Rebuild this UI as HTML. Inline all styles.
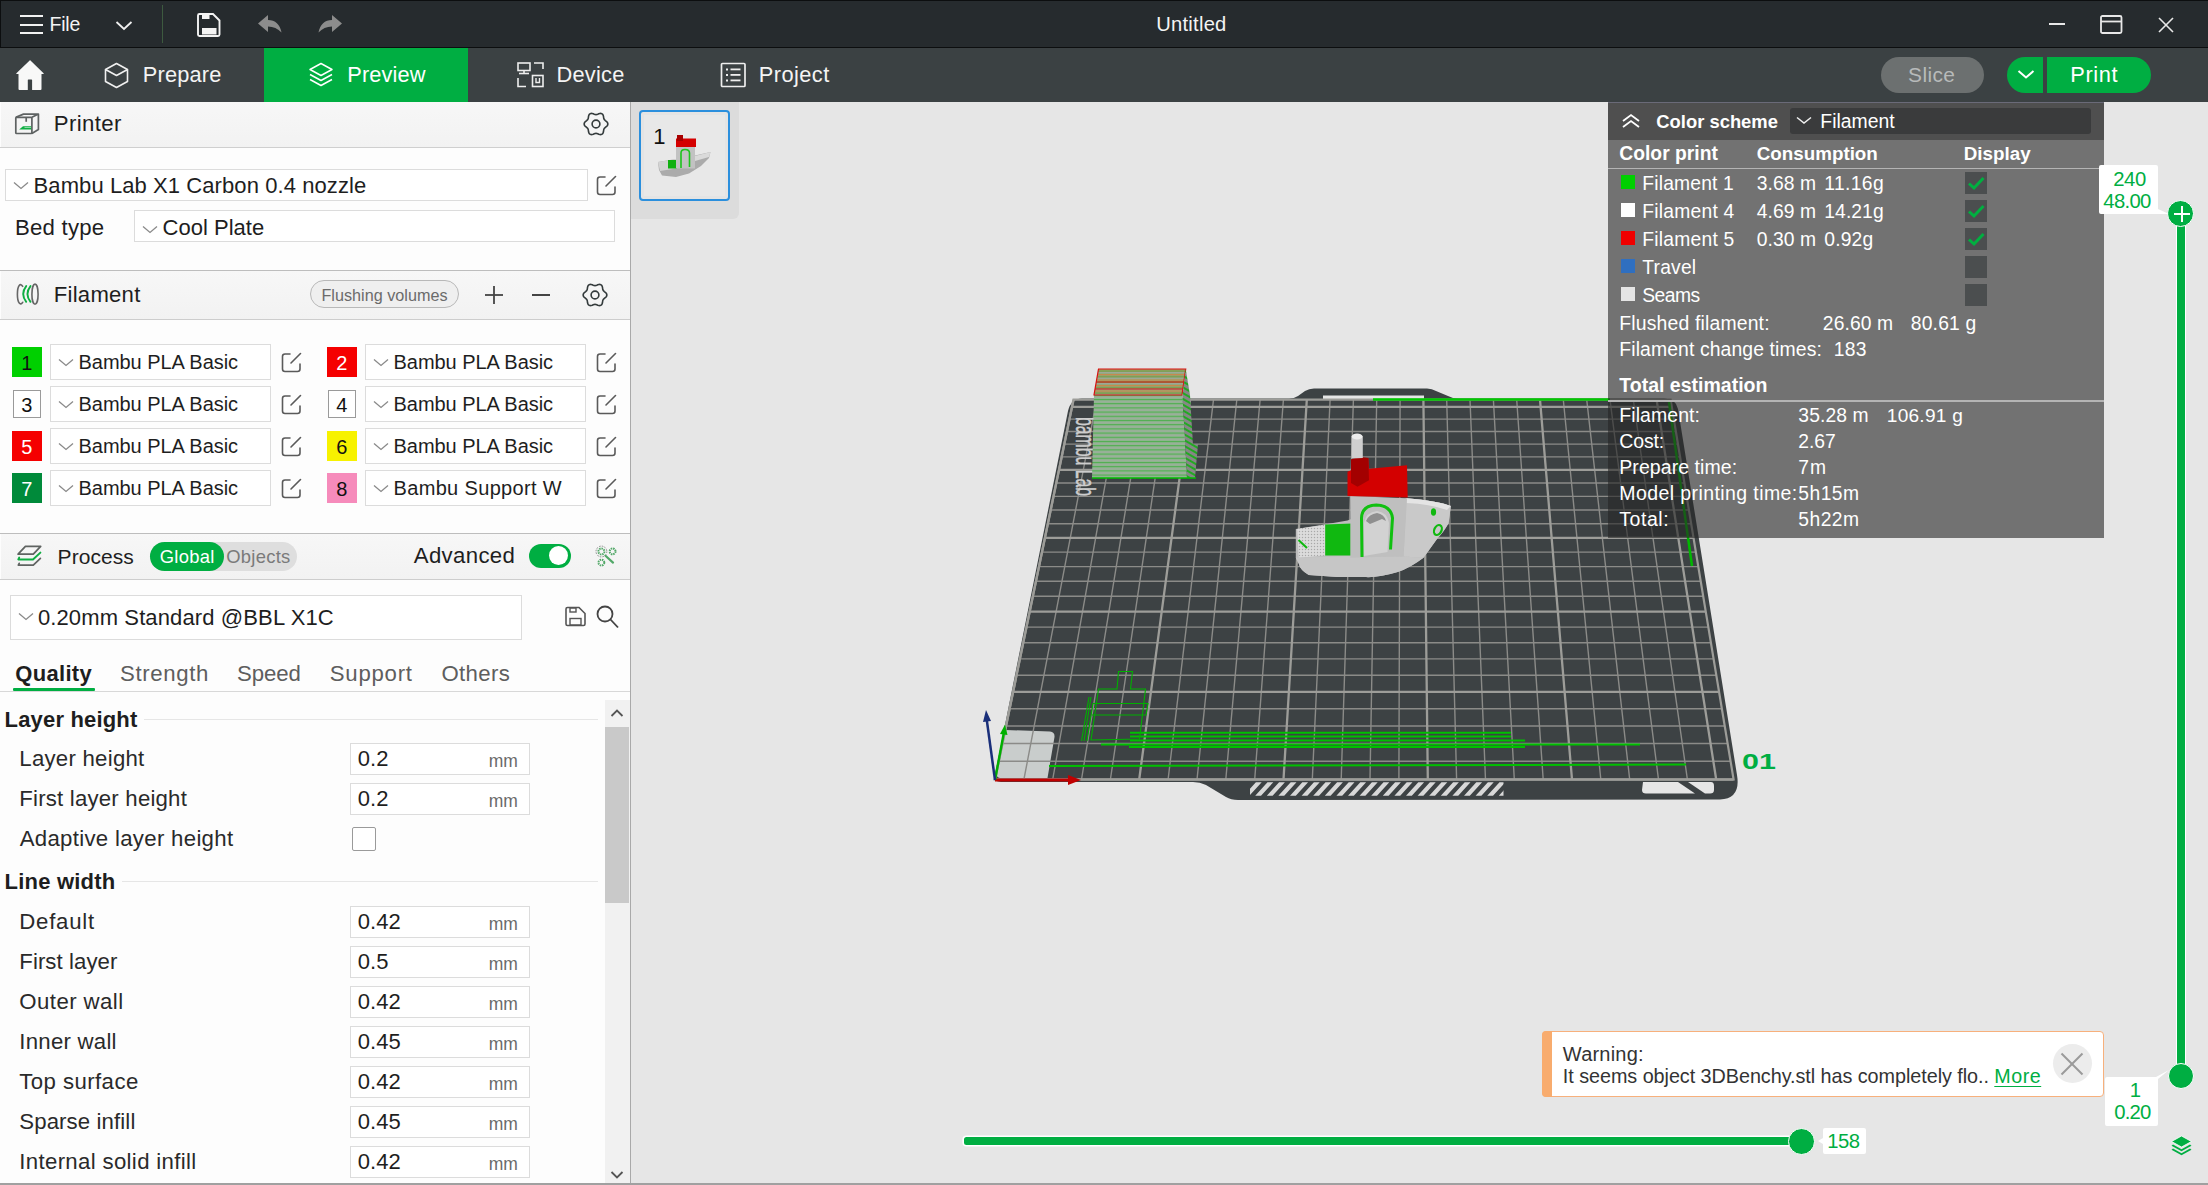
<!DOCTYPE html>
<html><head><meta charset="utf-8"><style>
html,body{margin:0;padding:0;width:2208px;height:1185px;overflow:hidden;background:#e6e6e6;}
body{position:relative;font-family:"Liberation Sans",sans-serif;}
.t{position:absolute;white-space:nowrap;}
svg{overflow:visible}
</style></head><body>
<div style="position:absolute;left:0px;top:0px;width:2208px;height:48px;background:#262b2e;"></div>
<div style="position:absolute;left:0px;top:0px;width:2208px;height:1px;background:#0c0e0f;"></div>
<div style="position:absolute;left:0px;top:0px;width:1px;height:48px;background:#0c0e0f;"></div>
<div style="position:absolute;left:0px;top:47px;width:2208px;height:1px;background:#0c0e0f;"></div>
<div style="position:absolute;left:20px;top:15px;width:23px;height:2px;background:#f2f2f2;"></div>
<div style="position:absolute;left:20px;top:24px;width:23px;height:2px;background:#f2f2f2;"></div>
<div style="position:absolute;left:20px;top:32px;width:23px;height:2px;background:#f2f2f2;"></div>
<div class="t" style="left:49.40px;top:14.99px;font-size:19.5px;line-height:19.5px;color:#f4f4f4;letter-spacing:-0.14px;">File</div>
<svg style="position:absolute;left:112px;top:18px;" width="26" height="14" viewBox="0 0 26 14"><polyline points="4.5,4 12,11 19.5,4" fill="none" stroke="#f0f0f0" stroke-width="1.8"/></svg>
<div style="position:absolute;left:162px;top:5px;width:1px;height:38px;background:#3d5a3f;"></div>
<svg style="position:absolute;left:196px;top:11px;" width="28" height="28" viewBox="0 0 28 28"><path d="M3.5,3 H17 L23.5,9.5 V23.5 Q23.5,25 22,25 H3.5 Q2,25 2,23.5 V4.5 Q2,3 3.5,3 Z" fill="none" stroke="#f4f4f4" stroke-width="1.9"/><rect x="6" y="3.5" width="7.5" height="4.5" fill="#f4f4f4"/><rect x="6" y="17" width="14.5" height="6.5" fill="#f4f4f4"/></svg>
<svg style="position:absolute;left:256.5px;top:14px;" width="28" height="22" viewBox="0 0 28 22"><path d="M1,9.5 L11,1 V6 Q22,6 24.5,18.5 Q19,12.5 11,12.5 V18 Z" fill="#8c8c8c"/></svg>
<svg style="position:absolute;left:316px;top:14px;" width="28" height="22" viewBox="0 0 28 22"><path d="M26,9.5 L16,1 V6 Q5,6 2.5,18.5 Q8,12.5 16,12.5 V18 Z" fill="#8c8c8c"/></svg>
<div class="t" style="left:1156.20px;top:14.40px;font-size:20.2px;line-height:20.2px;color:#f4f4f4;letter-spacing:0.245px;">Untitled</div>
<div style="position:absolute;left:2049px;top:23px;width:16px;height:2px;background:#e8e8e8;"></div>
<svg style="position:absolute;left:2100px;top:15px;" width="23" height="19" viewBox="0 0 23 19"><rect x="1" y="1" width="20.5" height="17" rx="1.5" fill="none" stroke="#e8e8e8" stroke-width="1.8"/><line x1="1" y1="6.5" x2="21.5" y2="6.5" stroke="#e8e8e8" stroke-width="1.8"/></svg>
<svg style="position:absolute;left:2158px;top:17px;" width="16" height="16" viewBox="0 0 16 16"><line x1="1" y1="1" x2="15" y2="15" stroke="#e8e8e8" stroke-width="1.6"/><line x1="15" y1="1" x2="1" y2="15" stroke="#e8e8e8" stroke-width="1.6"/></svg>
<div style="position:absolute;left:0px;top:48px;width:2208px;height:54px;background:#3b4143;"></div>
<div style="position:absolute;left:264px;top:48px;width:204px;height:54px;background:#00ae42;"></div>
<svg style="position:absolute;left:15px;top:59px;" width="31" height="32" viewBox="0 0 31 32"><path d="M14.9,1.2 Q15,1 15.2,1.2 L28.6,14.3 Q29.2,15 28.3,15 L26.5,15 V30 Q26.5,31 25.5,31 H17.1 V21 Q17.1,20.4 16.5,20.4 H13.4 Q12.8,20.4 12.8,21 V31 H4.5 Q3.5,31 3.5,30 V15 L1.7,15 Q0.8,15 1.4,14.3 Z" fill="#f8f8f8"/></svg>
<svg style="position:absolute;left:104px;top:62px;" width="26" height="27" viewBox="0 0 26 27"><path d="M12.5,1.5 L23.5,7.5 V19.5 L12.5,25.5 L1.5,19.5 V7.5 Z M1.5,7.5 L12.5,13.5 L23.5,7.5 M12.5,13.5" fill="none" stroke="#f0f0f0" stroke-width="1.6" stroke-linejoin="round"/></svg>
<div class="t" style="left:142.80px;top:64.15px;font-size:21.8px;line-height:21.8px;color:#f4f4f4;letter-spacing:0.175px;">Prepare</div>
<svg style="position:absolute;left:309px;top:62px;" width="25" height="26" viewBox="0 0 25 26"><path d="M12,1.5 L23,7.5 L12,13.5 L1,7.5 Z" fill="none" stroke="#fff" stroke-width="1.5" stroke-linejoin="round"/><path d="M1,12.5 L12,18.5 L23,12.5" fill="none" stroke="#fff" stroke-width="1.5" stroke-linejoin="round"/><path d="M1,17.5 L12,23.5 L23,17.5" fill="none" stroke="#fff" stroke-width="1.5" stroke-linejoin="round"/></svg>
<div class="t" style="left:347.30px;top:63.75px;font-size:21.8px;line-height:21.8px;color:#ffffff;letter-spacing:0.111px;">Preview</div>
<svg style="position:absolute;left:517px;top:62px;" width="28" height="26" viewBox="0 0 28 26"><rect x="1" y="1" width="12" height="7.5" fill="none" stroke="#eee" stroke-width="1.6"/><line x1="7" y1="8.5" x2="7" y2="11" stroke="#eee" stroke-width="1.6"/><line x1="2" y1="11.5" x2="12" y2="11.5" stroke="#eee" stroke-width="1.6"/><path d="M17,1 H26 V7" fill="none" stroke="#eee" stroke-width="1.6"/><path d="M1,16 V24.5 H9" fill="none" stroke="#eee" stroke-width="1.6"/><rect x="15.5" y="13.5" width="10.5" height="11" fill="none" stroke="#eee" stroke-width="1.6"/><path d="M19,16 V20.5 H22.5 V16" fill="none" stroke="#eee" stroke-width="1.4"/></svg>
<div class="t" style="left:556.50px;top:64.05px;font-size:21.8px;line-height:21.8px;color:#f4f4f4;letter-spacing:0.253px;">Device</div>
<svg style="position:absolute;left:720px;top:62px;" width="27" height="26" viewBox="0 0 27 26"><rect x="1.5" y="1.5" width="23.5" height="23" rx="1" fill="none" stroke="#eee" stroke-width="1.7"/><g fill="#eee"><rect x="6" y="6.5" width="2" height="2"/><rect x="6" y="12" width="2" height="2"/><rect x="6" y="17.5" width="2" height="2"/><rect x="10.5" y="6.5" width="10" height="1.8"/><rect x="10.5" y="12" width="10" height="1.8"/><rect x="10.5" y="17.5" width="10" height="1.8"/></g></svg>
<div class="t" style="left:758.80px;top:63.75px;font-size:21.8px;line-height:21.8px;color:#f4f4f4;letter-spacing:0.426px;">Project</div>
<div style="position:absolute;left:1881px;top:57px;width:103px;height:36px;background:#6c7070;border-radius:18px;"></div>
<div class="t" style="left:1908.10px;top:64.51px;font-size:20.9px;line-height:20.9px;color:#b7baba;letter-spacing:0.4px;">Slice</div>
<div style="position:absolute;left:2007px;top:57px;width:36px;height:36px;background:#00ae42;border-radius:18px 0 0 18px;"></div>
<svg style="position:absolute;left:2017px;top:69px;" width="18" height="12" viewBox="0 0 18 12"><polyline points="1.5,2 9,8.5 16.5,2" fill="none" stroke="#fff" stroke-width="2"/></svg>
<div style="position:absolute;left:2047px;top:57px;width:104px;height:36px;background:#00ae42;border-radius:0 18px 18px 0;"></div>
<div class="t" style="left:2070.30px;top:63.75px;font-size:21.8px;line-height:21.8px;color:#ffffff;letter-spacing:0.619px;">Print</div>
<div style="position:absolute;left:0px;top:102px;width:630px;height:1083px;background:#fdfdfd;"></div>
<div style="position:absolute;left:630px;top:102px;width:1px;height:1083px;background:#a9a9a9;"></div>
<div style="position:absolute;left:1px;top:102px;width:629px;height:45px;background:linear-gradient(#f7f7f7,#f2f2f2);"></div>
<div style="position:absolute;left:0px;top:147px;width:630px;height:1px;background:#cfcfcf;"></div>
<svg style="position:absolute;left:10px;top:108px;" width="35" height="32" viewBox="0 0 35 32"><g fill="none" stroke="#5e6262" stroke-width="1.7" stroke-linejoin="round"><rect x="5.8" y="9.3" width="16.1" height="16.2" rx="0.8"/><path d="M5.8,9.3 L13.5,6.1 H28.4 L21.9,9.3 M28.4,6.1 V21.6 L21.9,25.5"/><line x1="16.2" y1="9.5" x2="16.2" y2="13.8"/></g><path d="M9.2,21.5 L13,18.2 H21.1 V21.5 Z" fill="#0fae42"/><line x1="14.5" y1="19.5" x2="21" y2="19.5" stroke="#bfe8cc" stroke-width="0.7"/></svg>
<div class="t" style="left:53.80px;top:112.71px;font-size:22.2px;line-height:22.2px;color:#1e1e1e;letter-spacing:0.353px;">Printer</div>
<svg style="position:absolute;left:584px;top:112px;" width="24" height="24" viewBox="0 0 24 24"><path d="M23.85,12.00 L23.64,13.02 L23.05,13.95 L22.24,14.74 L21.37,15.41 L20.63,16.02 L20.10,16.67 L19.80,17.46 L19.64,18.41 L19.50,19.50 L19.22,20.60 L18.70,21.57 L17.93,22.26 L16.94,22.59 L15.84,22.55 L14.74,22.24 L13.73,21.82 L12.83,21.48 L12.00,21.35 L11.17,21.48 L10.27,21.82 L9.26,22.24 L8.16,22.55 L7.06,22.59 L6.08,22.26 L5.30,21.57 L4.78,20.60 L4.50,19.50 L4.36,18.41 L4.20,17.46 L3.90,16.68 L3.37,16.02 L2.63,15.41 L1.76,14.74 L0.95,13.95 L0.36,13.02 L0.15,12.00 L0.36,10.98 L0.95,10.05 L1.76,9.26 L2.63,8.59 L3.37,7.98 L3.90,7.32 L4.20,6.54 L4.36,5.59 L4.50,4.50 L4.78,3.40 L5.30,2.43 L6.07,1.74 L7.06,1.41 L8.16,1.45 L9.26,1.76 L10.27,2.18 L11.17,2.52 L12.00,2.65 L12.83,2.52 L13.73,2.18 L14.74,1.76 L15.84,1.45 L16.94,1.41 L17.92,1.74 L18.70,2.43 L19.22,3.40 L19.50,4.50 L19.64,5.59 L19.80,6.54 L20.10,7.33 L20.63,7.98 L21.37,8.59 L22.24,9.26 L23.05,10.05 L23.64,10.98 L23.85,12.00 Z" fill="none" stroke="#343b3c" stroke-width="1.6" stroke-linejoin="round"/><circle cx="12" cy="12" r="3.9" fill="none" stroke="#343b3c" stroke-width="1.6"/></svg>
<div style="position:absolute;left:5px;top:169px;width:583px;height:32px;border:1px solid #dcdcdc;background:#fff;box-sizing:border-box;"></div>
<svg style="position:absolute;left:13px;top:181px;" width="16" height="9" viewBox="0 0 16 9"><polyline points="1,1.5 8,7.5 15,1.5" fill="none" stroke="#8a8a8a" stroke-width="1.3"/></svg>
<div class="t" style="left:33.60px;top:174.88px;font-size:22px;line-height:22px;color:#1e1e1e;letter-spacing:0.083px;">Bambu Lab X1 Carbon 0.4 nozzle</div>
<svg style="position:absolute;left:595.5px;top:174.5px;" width="21" height="21" viewBox="0 0 21 21"><path d="M9,2 H4 Q1.5,2 1.5,4.5 V17 Q1.5,19.5 4,19.5 H16.5 Q19,19.5 19,17 V12" fill="none" stroke="#5a5a5a" stroke-width="1.6" stroke-linecap="round"/><line x1="10" y1="11" x2="19.5" y2="1.5" stroke="#5a5a5a" stroke-width="1.6" stroke-linecap="round"/></svg>
<div class="t" style="left:15.00px;top:216.51px;font-size:22.2px;line-height:22.2px;color:#1e1e1e;letter-spacing:0.225px;">Bed type</div>
<div style="position:absolute;left:134px;top:210px;width:481px;height:32px;border:1px solid #dcdcdc;background:#fff;box-sizing:border-box;"></div>
<svg style="position:absolute;left:142px;top:225px;" width="16" height="9" viewBox="0 0 16 9"><polyline points="1,1.5 8,7.5 15,1.5" fill="none" stroke="#8a8a8a" stroke-width="1.3"/></svg>
<div class="t" style="left:162.60px;top:216.68px;font-size:22px;line-height:22px;color:#1e1e1e;letter-spacing:0.011px;">Cool Plate</div>
<div style="position:absolute;left:0px;top:270px;width:630px;height:1px;background:#bdbdbd;"></div>
<div style="position:absolute;left:1px;top:271px;width:629px;height:48px;background:linear-gradient(#f7f7f7,#f2f2f2);"></div>
<div style="position:absolute;left:0px;top:319px;width:630px;height:1px;background:#cdcdcd;"></div>
<svg style="position:absolute;left:10px;top:278px;" width="35" height="32" viewBox="0 0 35 32"><g fill="none" stroke-width="1.6" stroke-linecap="round"><path d="M12.7,8.4 C10.5,4.5 7.4,7 7.4,16.2 C7.4,25.4 10.5,28 12.7,24.3" stroke="#666"/><ellipse cx="25" cy="16.2" rx="3.1" ry="10.1" stroke="#666"/><path d="M16.2,8.1 Q10.2,16 16.2,23.8" stroke="#0fae42" stroke-width="1.9"/><path d="M20.5,8.1 Q14.4,16 20.5,23.8" stroke="#0fae42" stroke-width="1.9"/></g></svg>
<div class="t" style="left:53.80px;top:284.09px;font-size:22.1px;line-height:22.1px;color:#1e1e1e;letter-spacing:0.252px;">Filament</div>
<div style="position:absolute;left:310px;top:280px;width:149px;height:28px;border:1px solid #b8b8b8;background:#efefef;border-radius:14px;box-sizing:border-box;"></div>
<div class="t" style="left:321.40px;top:287.39px;font-size:16.2px;line-height:16.2px;color:#6b6b6b;letter-spacing:0.01px;">Flushing volumes</div>
<svg style="position:absolute;left:484px;top:285px;" width="20" height="20" viewBox="0 0 20 20"><line x1="10" y1="1" x2="10" y2="19" stroke="#444" stroke-width="1.8"/><line x1="1" y1="10" x2="19" y2="10" stroke="#444" stroke-width="1.8"/></svg>
<div style="position:absolute;left:532px;top:294px;width:18px;height:2px;background:#444;"></div>
<svg style="position:absolute;left:583px;top:283px;" width="24" height="24" viewBox="0 0 24 24"><path d="M23.85,12.00 L23.64,13.02 L23.05,13.95 L22.24,14.74 L21.37,15.41 L20.63,16.02 L20.10,16.67 L19.80,17.46 L19.64,18.41 L19.50,19.50 L19.22,20.60 L18.70,21.57 L17.93,22.26 L16.94,22.59 L15.84,22.55 L14.74,22.24 L13.73,21.82 L12.83,21.48 L12.00,21.35 L11.17,21.48 L10.27,21.82 L9.26,22.24 L8.16,22.55 L7.06,22.59 L6.08,22.26 L5.30,21.57 L4.78,20.60 L4.50,19.50 L4.36,18.41 L4.20,17.46 L3.90,16.68 L3.37,16.02 L2.63,15.41 L1.76,14.74 L0.95,13.95 L0.36,13.02 L0.15,12.00 L0.36,10.98 L0.95,10.05 L1.76,9.26 L2.63,8.59 L3.37,7.98 L3.90,7.32 L4.20,6.54 L4.36,5.59 L4.50,4.50 L4.78,3.40 L5.30,2.43 L6.07,1.74 L7.06,1.41 L8.16,1.45 L9.26,1.76 L10.27,2.18 L11.17,2.52 L12.00,2.65 L12.83,2.52 L13.73,2.18 L14.74,1.76 L15.84,1.45 L16.94,1.41 L17.92,1.74 L18.70,2.43 L19.22,3.40 L19.50,4.50 L19.64,5.59 L19.80,6.54 L20.10,7.33 L20.63,7.98 L21.37,8.59 L22.24,9.26 L23.05,10.05 L23.64,10.98 L23.85,12.00 Z" fill="none" stroke="#343b3c" stroke-width="1.6" stroke-linejoin="round"/><circle cx="12" cy="12" r="3.9" fill="none" stroke="#343b3c" stroke-width="1.6"/></svg>
<div style="position:absolute;left:12px;top:347px;width:30px;height:30px;background:#00d000;"></div>
<div class="t" style="left:21.30px;top:352.67px;font-size:20px;line-height:20px;color:#111;">1</div>
<div style="position:absolute;left:50px;top:344px;width:221px;height:36px;border:1px solid #dcdcdc;background:#fff;box-sizing:border-box;"></div>
<svg style="position:absolute;left:58px;top:358px;" width="16" height="9" viewBox="0 0 16 9"><polyline points="1,1.5 8,7.5 15,1.5" fill="none" stroke="#8a8a8a" stroke-width="1.3"/></svg>
<div class="t" style="left:78.50px;top:352.17px;font-size:20px;line-height:20px;color:#1e1e1e;letter-spacing:-0.035px;">Bambu PLA Basic</div>
<svg style="position:absolute;left:280.5px;top:352px;" width="21" height="21" viewBox="0 0 21 21"><path d="M9,2 H4 Q1.5,2 1.5,4.5 V17 Q1.5,19.5 4,19.5 H16.5 Q19,19.5 19,17 V12" fill="none" stroke="#5a5a5a" stroke-width="1.6" stroke-linecap="round"/><line x1="10" y1="11" x2="19.5" y2="1.5" stroke="#5a5a5a" stroke-width="1.6" stroke-linecap="round"/></svg>
<div style="position:absolute;left:327px;top:347px;width:30px;height:30px;background:#f50000;"></div>
<div class="t" style="left:336.30px;top:352.67px;font-size:20px;line-height:20px;color:#fff;">2</div>
<div style="position:absolute;left:365px;top:344px;width:221px;height:36px;border:1px solid #dcdcdc;background:#fff;box-sizing:border-box;"></div>
<svg style="position:absolute;left:373px;top:358px;" width="16" height="9" viewBox="0 0 16 9"><polyline points="1,1.5 8,7.5 15,1.5" fill="none" stroke="#8a8a8a" stroke-width="1.3"/></svg>
<div class="t" style="left:393.50px;top:352.17px;font-size:20px;line-height:20px;color:#1e1e1e;letter-spacing:-0.035px;">Bambu PLA Basic</div>
<svg style="position:absolute;left:595.5px;top:352px;" width="21" height="21" viewBox="0 0 21 21"><path d="M9,2 H4 Q1.5,2 1.5,4.5 V17 Q1.5,19.5 4,19.5 H16.5 Q19,19.5 19,17 V12" fill="none" stroke="#5a5a5a" stroke-width="1.6" stroke-linecap="round"/><line x1="10" y1="11" x2="19.5" y2="1.5" stroke="#5a5a5a" stroke-width="1.6" stroke-linecap="round"/></svg>
<div style="position:absolute;left:13px;top:390px;width:28px;height:28px;background:#ffffff;border:1px solid #9a9a9a;box-sizing:border-box;"></div>
<div class="t" style="left:21.30px;top:394.67px;font-size:20px;line-height:20px;color:#111;">3</div>
<div style="position:absolute;left:50px;top:386px;width:221px;height:36px;border:1px solid #dcdcdc;background:#fff;box-sizing:border-box;"></div>
<svg style="position:absolute;left:58px;top:400px;" width="16" height="9" viewBox="0 0 16 9"><polyline points="1,1.5 8,7.5 15,1.5" fill="none" stroke="#8a8a8a" stroke-width="1.3"/></svg>
<div class="t" style="left:78.50px;top:394.17px;font-size:20px;line-height:20px;color:#1e1e1e;letter-spacing:-0.035px;">Bambu PLA Basic</div>
<svg style="position:absolute;left:280.5px;top:394px;" width="21" height="21" viewBox="0 0 21 21"><path d="M9,2 H4 Q1.5,2 1.5,4.5 V17 Q1.5,19.5 4,19.5 H16.5 Q19,19.5 19,17 V12" fill="none" stroke="#5a5a5a" stroke-width="1.6" stroke-linecap="round"/><line x1="10" y1="11" x2="19.5" y2="1.5" stroke="#5a5a5a" stroke-width="1.6" stroke-linecap="round"/></svg>
<div style="position:absolute;left:328px;top:390px;width:28px;height:28px;background:#ffffff;border:1px solid #9a9a9a;box-sizing:border-box;"></div>
<div class="t" style="left:336.30px;top:394.67px;font-size:20px;line-height:20px;color:#111;">4</div>
<div style="position:absolute;left:365px;top:386px;width:221px;height:36px;border:1px solid #dcdcdc;background:#fff;box-sizing:border-box;"></div>
<svg style="position:absolute;left:373px;top:400px;" width="16" height="9" viewBox="0 0 16 9"><polyline points="1,1.5 8,7.5 15,1.5" fill="none" stroke="#8a8a8a" stroke-width="1.3"/></svg>
<div class="t" style="left:393.50px;top:394.17px;font-size:20px;line-height:20px;color:#1e1e1e;letter-spacing:-0.035px;">Bambu PLA Basic</div>
<svg style="position:absolute;left:595.5px;top:394px;" width="21" height="21" viewBox="0 0 21 21"><path d="M9,2 H4 Q1.5,2 1.5,4.5 V17 Q1.5,19.5 4,19.5 H16.5 Q19,19.5 19,17 V12" fill="none" stroke="#5a5a5a" stroke-width="1.6" stroke-linecap="round"/><line x1="10" y1="11" x2="19.5" y2="1.5" stroke="#5a5a5a" stroke-width="1.6" stroke-linecap="round"/></svg>
<div style="position:absolute;left:12px;top:431px;width:30px;height:30px;background:#f50000;"></div>
<div class="t" style="left:21.30px;top:436.67px;font-size:20px;line-height:20px;color:#fff;">5</div>
<div style="position:absolute;left:50px;top:428px;width:221px;height:36px;border:1px solid #dcdcdc;background:#fff;box-sizing:border-box;"></div>
<svg style="position:absolute;left:58px;top:442px;" width="16" height="9" viewBox="0 0 16 9"><polyline points="1,1.5 8,7.5 15,1.5" fill="none" stroke="#8a8a8a" stroke-width="1.3"/></svg>
<div class="t" style="left:78.50px;top:436.17px;font-size:20px;line-height:20px;color:#1e1e1e;letter-spacing:-0.035px;">Bambu PLA Basic</div>
<svg style="position:absolute;left:280.5px;top:436px;" width="21" height="21" viewBox="0 0 21 21"><path d="M9,2 H4 Q1.5,2 1.5,4.5 V17 Q1.5,19.5 4,19.5 H16.5 Q19,19.5 19,17 V12" fill="none" stroke="#5a5a5a" stroke-width="1.6" stroke-linecap="round"/><line x1="10" y1="11" x2="19.5" y2="1.5" stroke="#5a5a5a" stroke-width="1.6" stroke-linecap="round"/></svg>
<div style="position:absolute;left:327px;top:431px;width:30px;height:30px;background:#f7f200;"></div>
<div class="t" style="left:336.30px;top:436.67px;font-size:20px;line-height:20px;color:#111;">6</div>
<div style="position:absolute;left:365px;top:428px;width:221px;height:36px;border:1px solid #dcdcdc;background:#fff;box-sizing:border-box;"></div>
<svg style="position:absolute;left:373px;top:442px;" width="16" height="9" viewBox="0 0 16 9"><polyline points="1,1.5 8,7.5 15,1.5" fill="none" stroke="#8a8a8a" stroke-width="1.3"/></svg>
<div class="t" style="left:393.50px;top:436.17px;font-size:20px;line-height:20px;color:#1e1e1e;letter-spacing:-0.035px;">Bambu PLA Basic</div>
<svg style="position:absolute;left:595.5px;top:436px;" width="21" height="21" viewBox="0 0 21 21"><path d="M9,2 H4 Q1.5,2 1.5,4.5 V17 Q1.5,19.5 4,19.5 H16.5 Q19,19.5 19,17 V12" fill="none" stroke="#5a5a5a" stroke-width="1.6" stroke-linecap="round"/><line x1="10" y1="11" x2="19.5" y2="1.5" stroke="#5a5a5a" stroke-width="1.6" stroke-linecap="round"/></svg>
<div style="position:absolute;left:12px;top:473px;width:30px;height:30px;background:#008a3a;"></div>
<div class="t" style="left:21.30px;top:478.67px;font-size:20px;line-height:20px;color:#fff;">7</div>
<div style="position:absolute;left:50px;top:470px;width:221px;height:36px;border:1px solid #dcdcdc;background:#fff;box-sizing:border-box;"></div>
<svg style="position:absolute;left:58px;top:484px;" width="16" height="9" viewBox="0 0 16 9"><polyline points="1,1.5 8,7.5 15,1.5" fill="none" stroke="#8a8a8a" stroke-width="1.3"/></svg>
<div class="t" style="left:78.50px;top:478.17px;font-size:20px;line-height:20px;color:#1e1e1e;letter-spacing:-0.035px;">Bambu PLA Basic</div>
<svg style="position:absolute;left:280.5px;top:478px;" width="21" height="21" viewBox="0 0 21 21"><path d="M9,2 H4 Q1.5,2 1.5,4.5 V17 Q1.5,19.5 4,19.5 H16.5 Q19,19.5 19,17 V12" fill="none" stroke="#5a5a5a" stroke-width="1.6" stroke-linecap="round"/><line x1="10" y1="11" x2="19.5" y2="1.5" stroke="#5a5a5a" stroke-width="1.6" stroke-linecap="round"/></svg>
<div style="position:absolute;left:327px;top:473px;width:30px;height:30px;background:#f68bbb;"></div>
<div class="t" style="left:336.30px;top:478.67px;font-size:20px;line-height:20px;color:#111;">8</div>
<div style="position:absolute;left:365px;top:470px;width:221px;height:36px;border:1px solid #dcdcdc;background:#fff;box-sizing:border-box;"></div>
<svg style="position:absolute;left:373px;top:484px;" width="16" height="9" viewBox="0 0 16 9"><polyline points="1,1.5 8,7.5 15,1.5" fill="none" stroke="#8a8a8a" stroke-width="1.3"/></svg>
<div class="t" style="left:393.50px;top:478.17px;font-size:20px;line-height:20px;color:#1e1e1e;letter-spacing:0.343px;">Bambu Support W</div>
<svg style="position:absolute;left:595.5px;top:478px;" width="21" height="21" viewBox="0 0 21 21"><path d="M9,2 H4 Q1.5,2 1.5,4.5 V17 Q1.5,19.5 4,19.5 H16.5 Q19,19.5 19,17 V12" fill="none" stroke="#5a5a5a" stroke-width="1.6" stroke-linecap="round"/><line x1="10" y1="11" x2="19.5" y2="1.5" stroke="#5a5a5a" stroke-width="1.6" stroke-linecap="round"/></svg>
<div style="position:absolute;left:0px;top:533px;width:630px;height:1px;background:#bdbdbd;"></div>
<div style="position:absolute;left:1px;top:534px;width:629px;height:45px;background:linear-gradient(#f7f7f7,#f2f2f2);"></div>
<div style="position:absolute;left:0px;top:579px;width:630px;height:1px;background:#cdcdcd;"></div>
<svg style="position:absolute;left:10px;top:540px;" width="40" height="35" viewBox="0 0 40 35"><g fill="none" stroke-width="1.7" stroke-linejoin="round" stroke-linecap="round"><path d="M8.1,14.2 L15.4,6.4 H30.7 L23.3,14.2 Z" stroke="#5f6361"/><path d="M9.2,17.6 L8.3,19.5 H23 L30.4,12.6" stroke="#0fae42" stroke-width="1.9"/><path d="M9.2,23.3 L8.3,25.1 H23.3 L30.4,18.3" stroke="#5f6361"/></g></svg>
<div class="t" style="left:57.60px;top:546.02px;font-size:21px;line-height:21px;color:#1e1e1e;letter-spacing:0.041px;">Process</div>
<div style="position:absolute;left:150px;top:542px;width:147px;height:29px;background:#dedede;border-radius:14.5px;"></div>
<div style="position:absolute;left:150px;top:542px;width:74px;height:29px;background:#00ae42;border-radius:14.5px;"></div>
<div class="t" style="left:159.70px;top:548.22px;font-size:18.4px;line-height:18.4px;color:#ffffff;letter-spacing:0.283px;">Global</div>
<div class="t" style="left:226.30px;top:548.22px;font-size:18.4px;line-height:18.4px;color:#7a7a7a;letter-spacing:0.271px;">Objects</div>
<div class="t" style="left:413.80px;top:545.01px;font-size:22.2px;line-height:22.2px;color:#1e1e1e;letter-spacing:0.338px;">Advanced</div>
<div style="position:absolute;left:529px;top:543.5px;width:41.5px;height:24px;background:#00ae42;border-radius:12px;"></div>
<div style="position:absolute;left:549px;top:546px;width:19px;height:19px;background:#fff;border-radius:50%;"></div>
<svg style="position:absolute;left:590px;top:540px;" width="35" height="35" viewBox="0 0 35 35"><circle cx="11.4" cy="11.5" r="5.4" fill="none" stroke="#8a8a8a" stroke-width="1" stroke-dasharray="1.6 1.2"/><circle cx="11.4" cy="11.5" r="3" fill="none" stroke="#52a868" stroke-width="2" stroke-dasharray="1.5 0.8"/><circle cx="22.6" cy="11.4" r="2.9" fill="none" stroke="#52a868" stroke-width="2" stroke-dasharray="1.5 0.8"/><circle cx="11.4" cy="22.6" r="2.9" fill="none" stroke="#52a868" stroke-width="2" stroke-dasharray="1.5 0.8"/><line x1="15.5" y1="15.8" x2="23" y2="22.6" stroke="#52a868" stroke-width="2.2" stroke-linecap="round"/></svg>
<div style="position:absolute;left:10px;top:595px;width:512px;height:45px;border:1px solid #dcdcdc;background:#fff;box-sizing:border-box;"></div>
<svg style="position:absolute;left:18px;top:612px;" width="16" height="9" viewBox="0 0 16 9"><polyline points="1,1.5 8,7.5 15,1.5" fill="none" stroke="#8a8a8a" stroke-width="1.3"/></svg>
<div class="t" style="left:37.90px;top:606.68px;font-size:22px;line-height:22px;color:#1e1e1e;letter-spacing:0.123px;">0.20mm Standard @BBL X1C</div>
<svg style="position:absolute;left:565px;top:606px;" width="22" height="21" viewBox="0 0 22 21"><path d="M2.5,1.5 H14 L20,7.5 V18 Q20,19.5 18.5,19.5 H2.5 Q1,19.5 1,18 V3 Q1,1.5 2.5,1.5 Z" fill="none" stroke="#555" stroke-width="1.6"/><rect x="5" y="2" width="6" height="4" fill="none" stroke="#555" stroke-width="1.4"/><rect x="5" y="12.5" width="11" height="6.5" fill="none" stroke="#555" stroke-width="1.4"/></svg>
<svg style="position:absolute;left:596px;top:605px;" width="24" height="25" viewBox="0 0 24 25"><circle cx="9" cy="9" r="7.5" fill="none" stroke="#444" stroke-width="1.8"/><line x1="14.5" y1="14.5" x2="22" y2="22.5" stroke="#444" stroke-width="1.8"/></svg>
<div class="t" style="left:15.30px;top:663.18px;font-size:22px;line-height:22px;color:#1e1e1e;font-weight:bold;letter-spacing:0.306px;">Quality</div>
<div style="position:absolute;left:13px;top:688px;width:82px;height:3px;background:#00ae42;border-radius:1px;"></div>
<div class="t" style="left:120.00px;top:663.01px;font-size:22.2px;line-height:22.2px;color:#5e5e5e;letter-spacing:0.655px;">Strength</div>
<div class="t" style="left:237.10px;top:663.01px;font-size:22.2px;line-height:22.2px;color:#5e5e5e;letter-spacing:-0.072px;">Speed</div>
<div class="t" style="left:329.80px;top:663.01px;font-size:22.2px;line-height:22.2px;color:#5e5e5e;letter-spacing:0.742px;">Support</div>
<div class="t" style="left:441.40px;top:663.01px;font-size:22.2px;line-height:22.2px;color:#5e5e5e;letter-spacing:0.397px;">Others</div>
<div style="position:absolute;left:0px;top:691px;width:630px;height:1px;background:#d8d8d8;"></div>
<div style="position:absolute;left:605px;top:700px;width:25px;height:483px;background:#f1f1f1;"></div>
<div style="position:absolute;left:605px;top:727px;width:24px;height:176px;background:#c9c9c9;"></div>
<svg style="position:absolute;left:610px;top:708px;" width="14" height="10" viewBox="0 0 14 10"><polyline points="1.5,8 7,2.5 12.5,8" fill="none" stroke="#555" stroke-width="1.8"/></svg>
<svg style="position:absolute;left:610px;top:1170px;" width="14" height="10" viewBox="0 0 14 10"><polyline points="1.5,2 7,7.5 12.5,2" fill="none" stroke="#555" stroke-width="1.8"/></svg>
<div class="t" style="left:4.60px;top:708.58px;font-size:22px;line-height:22px;color:#1e1e1e;font-weight:bold;letter-spacing:0.164px;">Layer height</div>
<div style="position:absolute;left:144px;top:718.7px;width:454px;height:1px;background:#e6e6e6;"></div>
<div class="t" style="left:19.30px;top:748.21px;font-size:22.2px;line-height:22.2px;color:#2a2a2a;letter-spacing:0.257px;">Layer height</div>
<div style="position:absolute;left:350px;top:742.5px;width:180px;height:32px;border:1px solid #dcdcdc;background:#fff;box-sizing:border-box;"></div>
<div class="t" style="left:357.80px;top:748.38px;font-size:22px;line-height:22px;color:#1e1e1e;">0.2</div>
<div class="t" style="left:488.80px;top:753.19px;font-size:17.5px;line-height:17.5px;color:#6a6a6a;">mm</div>
<div class="t" style="left:19.30px;top:788.21px;font-size:22.2px;line-height:22.2px;color:#2a2a2a;letter-spacing:0.207px;">First layer height</div>
<div style="position:absolute;left:350px;top:782.5px;width:180px;height:32px;border:1px solid #dcdcdc;background:#fff;box-sizing:border-box;"></div>
<div class="t" style="left:357.80px;top:788.38px;font-size:22px;line-height:22px;color:#1e1e1e;">0.2</div>
<div class="t" style="left:488.80px;top:793.19px;font-size:17.5px;line-height:17.5px;color:#6a6a6a;">mm</div>
<div class="t" style="left:19.70px;top:827.71px;font-size:22.2px;line-height:22.2px;color:#2a2a2a;letter-spacing:0.309px;">Adaptive layer height</div>
<div style="position:absolute;left:351.5px;top:826.5px;width:24px;height:24px;border:1.5px solid #9a9a9a;background:#fff;border-radius:2px;box-sizing:border-box;"></div>
<div class="t" style="left:4.60px;top:870.88px;font-size:22px;line-height:22px;color:#1e1e1e;font-weight:bold;letter-spacing:0.205px;">Line width</div>
<div style="position:absolute;left:122px;top:881px;width:476px;height:1px;background:#e6e6e6;"></div>
<div class="t" style="left:19.30px;top:911.21px;font-size:22.2px;line-height:22.2px;color:#2a2a2a;letter-spacing:0.761px;">Default</div>
<div style="position:absolute;left:350px;top:905.5px;width:180px;height:32px;border:1px solid #dcdcdc;background:#fff;box-sizing:border-box;"></div>
<div class="t" style="left:357.80px;top:911.38px;font-size:22px;line-height:22px;color:#1e1e1e;">0.42</div>
<div class="t" style="left:488.80px;top:916.19px;font-size:17.5px;line-height:17.5px;color:#6a6a6a;">mm</div>
<div class="t" style="left:19.30px;top:951.21px;font-size:22.2px;line-height:22.2px;color:#2a2a2a;letter-spacing:0.067px;">First layer</div>
<div style="position:absolute;left:350px;top:945.5px;width:180px;height:32px;border:1px solid #dcdcdc;background:#fff;box-sizing:border-box;"></div>
<div class="t" style="left:357.80px;top:951.38px;font-size:22px;line-height:22px;color:#1e1e1e;">0.5</div>
<div class="t" style="left:488.80px;top:956.19px;font-size:17.5px;line-height:17.5px;color:#6a6a6a;">mm</div>
<div class="t" style="left:19.30px;top:991.21px;font-size:22.2px;line-height:22.2px;color:#2a2a2a;letter-spacing:0.441px;">Outer wall</div>
<div style="position:absolute;left:350px;top:985.5px;width:180px;height:32px;border:1px solid #dcdcdc;background:#fff;box-sizing:border-box;"></div>
<div class="t" style="left:357.80px;top:991.38px;font-size:22px;line-height:22px;color:#1e1e1e;">0.42</div>
<div class="t" style="left:488.80px;top:996.19px;font-size:17.5px;line-height:17.5px;color:#6a6a6a;">mm</div>
<div class="t" style="left:19.30px;top:1031.21px;font-size:22.2px;line-height:22.2px;color:#2a2a2a;letter-spacing:0.255px;">Inner wall</div>
<div style="position:absolute;left:350px;top:1025.5px;width:180px;height:32px;border:1px solid #dcdcdc;background:#fff;box-sizing:border-box;"></div>
<div class="t" style="left:357.80px;top:1031.38px;font-size:22px;line-height:22px;color:#1e1e1e;">0.45</div>
<div class="t" style="left:488.80px;top:1036.19px;font-size:17.5px;line-height:17.5px;color:#6a6a6a;">mm</div>
<div class="t" style="left:19.30px;top:1071.21px;font-size:22.2px;line-height:22.2px;color:#2a2a2a;letter-spacing:0.425px;">Top surface</div>
<div style="position:absolute;left:350px;top:1065.5px;width:180px;height:32px;border:1px solid #dcdcdc;background:#fff;box-sizing:border-box;"></div>
<div class="t" style="left:357.80px;top:1071.38px;font-size:22px;line-height:22px;color:#1e1e1e;">0.42</div>
<div class="t" style="left:488.80px;top:1076.19px;font-size:17.5px;line-height:17.5px;color:#6a6a6a;">mm</div>
<div class="t" style="left:19.30px;top:1111.21px;font-size:22.2px;line-height:22.2px;color:#2a2a2a;letter-spacing:0.113px;">Sparse infill</div>
<div style="position:absolute;left:350px;top:1105.5px;width:180px;height:32px;border:1px solid #dcdcdc;background:#fff;box-sizing:border-box;"></div>
<div class="t" style="left:357.80px;top:1111.38px;font-size:22px;line-height:22px;color:#1e1e1e;">0.45</div>
<div class="t" style="left:488.80px;top:1116.19px;font-size:17.5px;line-height:17.5px;color:#6a6a6a;">mm</div>
<div class="t" style="left:19.30px;top:1151.21px;font-size:22.2px;line-height:22.2px;color:#2a2a2a;letter-spacing:0.336px;">Internal solid infill</div>
<div style="position:absolute;left:350px;top:1145.5px;width:180px;height:32px;border:1px solid #dcdcdc;background:#fff;box-sizing:border-box;"></div>
<div class="t" style="left:357.80px;top:1151.38px;font-size:22px;line-height:22px;color:#1e1e1e;">0.42</div>
<div class="t" style="left:488.80px;top:1156.19px;font-size:17.5px;line-height:17.5px;color:#6a6a6a;">mm</div>
<div style="position:absolute;left:0px;top:1183px;width:2208px;height:2px;background:#a0a0a0;"></div>
<div style="position:absolute;left:631px;top:102px;width:1577px;height:1081px;background:#e6e6e6;"></div>
<div style="position:absolute;left:631px;top:102px;width:108px;height:117px;background:#dcdcdc;border-radius:0 0 6px 0;"></div>
<div style="position:absolute;left:639px;top:110px;width:91px;height:91px;border:2px solid #2b8fdd;border-radius:4px;background:#e4e4e4;box-sizing:border-box;"></div>
<div style="position:absolute;left:644px;top:115px;width:81px;height:81px;background:#e8e8e8;"></div>
<div class="t" style="left:653.30px;top:126.38px;font-size:22px;line-height:22px;color:#111111;">1</div>
<svg style="position:absolute;left:0px;top:0px;" width="2208" height="1185" viewBox="0 0 2208 1185">
<path d="M658,162 L676,159 L695,155.5 L710.5,152 L709,158 L701,166 L689,173.5 L676,177 L662,175.5 L659,170 Z" fill="#ababab"/>
<path d="M658,162 L676,159 L676,168.5 L660,171 Z" fill="#d3d3d3"/>
<path d="M695,156 L710.5,152 L709,157 L695,161 Z" fill="#dadada"/>
<rect x="668" y="160" width="9" height="8.5" fill="#10b010"/>
<rect x="676" y="146.7" width="19" height="21.8" fill="#c2c2c2"/>
<path d="M681,168 V153 Q681,149.5 685,149.5 Q689.5,149.5 689.5,153 V167" fill="none" stroke="#1cc41c" stroke-width="1.6"/>
<rect x="676" y="138.5" width="20" height="8.5" fill="#d40000"/>
<rect x="677" y="135" width="6" height="6" fill="#a80000"/>
</svg>
<svg style="position:absolute;left:0;top:0" width="2208" height="1185" viewBox="0 0 2208 1185"><path d="M1082,398.5 L1289,398.5 Q1294,398.5 1298,396 L1305,391 Q1309,388.5 1314,388.5 L1427,388.5 Q1432,388.5 1436,391 L1448,396 Q1453,398.5 1458,398.5 L1664,398.5 Q1676,398.5 1678,409 L1737,775 Q1741,798.5 1720,799.5 L1238,800 Q1231,800 1226,797 L1206,785 Q1200,782 1193,782 L1001,782 Q993.5,781.5 994.5,777 L1068,411 Q1071,398.5 1082,398.5 Z" fill="#3d4244"/><rect x="1323" y="395.5" width="101" height="3.5" fill="#e6e6e6"/><path d="M1006,730 L1050,731.5 Q1055,732 1054.5,737 L1047.5,778 L1000,778 Q995.5,777 996.5,772 L1003,734 Q1003.5,730 1006,730 Z" fill="#c9cdcc"/><path d="M1023.9,779.5L1096.8,399.7M1052.7,779.5L1120.2,399.7M1081.5,779.5L1143.5,399.7M1110.4,779.5L1166.8,399.7M1168.1,779.5L1213.5,399.7M1197.0,779.5L1236.8,399.7M1225.8,779.5L1260.1,399.7M1254.7,779.5L1283.4,399.7M1312.3,779.5L1330.1,399.7M1341.2,779.5L1353.4,399.7M1370.0,779.5L1376.7,399.7M1398.9,779.5L1400.1,399.7M1456.6,779.5L1446.7,399.7M1485.5,779.5L1470.0,399.7M1514.3,779.5L1493.4,399.7M1543.2,779.5L1516.7,399.7M1600.8,779.5L1563.3,399.7M1629.7,779.5L1586.7,399.7M1658.5,779.5L1610.0,399.7M1687.4,779.5L1633.3,399.7M998.8,761.3L1730.5,761.3M1002.4,743.5L1727.6,743.5M1006.1,726.0L1724.7,726.0M1009.6,708.7L1721.8,708.7M1016.6,675.2L1716.3,675.2M1019.9,658.9L1713.6,658.9M1023.3,642.8L1710.9,642.8M1026.5,627.1L1708.3,627.1M1032.9,596.3L1703.2,596.3M1036.0,581.3L1700.7,581.3M1039.0,566.6L1698.3,566.6M1042.0,552.1L1695.9,552.1M1047.9,523.8L1691.2,523.8M1050.7,510.0L1688.9,510.0M1053.5,496.4L1686.6,496.4M1056.3,483.0L1684.4,483.0M1061.7,456.9L1680.1,456.9M1064.3,444.1L1678.0,444.1M1066.9,431.5L1675.9,431.5M1069.5,419.1L1673.8,419.1" stroke="#8b8b88" stroke-width="1.4" fill="none"/><path d="M995.0,779.5L1073.5,399.7M1139.2,779.5L1190.1,399.7M1283.5,779.5L1306.8,399.7M1427.8,779.5L1423.4,399.7M1572.0,779.5L1540.0,399.7M1716.2,779.5L1656.6,399.7M995.0,779.5L1733.6,779.5M1013.1,691.8L1719.0,691.8M1029.7,611.6L1705.7,611.6M1045.0,537.8L1693.5,537.8M1059.0,469.8L1682.2,469.8M1072.0,406.9L1671.8,406.9" stroke="#9d9d99" stroke-width="2.3" fill="none"/><polygon points="995.0,779.5 1733.6,779.5 1670.6,399.7 1073.5,399.7" fill="none" stroke="#9d9d99" stroke-width="2.2"/><clipPath id="hc"><rect x="1250" y="782" width="253.5" height="14"/></clipPath><path clip-path="url(#hc)" d="M1232.0,795.7L1237.8,795.7L1250.1,782.2L1244.3,782.2ZM1243.6,795.7L1249.4,795.7L1261.7,782.2L1255.9,782.2ZM1255.2,795.7L1261.0,795.7L1273.3,782.2L1267.5,782.2ZM1266.8,795.7L1272.6,795.7L1284.9,782.2L1279.1,782.2ZM1278.4,795.7L1284.2,795.7L1296.5,782.2L1290.7,782.2ZM1290.0,795.7L1295.8,795.7L1308.1,782.2L1302.3,782.2ZM1301.6,795.7L1307.4,795.7L1319.7,782.2L1313.9,782.2ZM1313.2,795.7L1319.0,795.7L1331.3,782.2L1325.5,782.2ZM1324.8,795.7L1330.6,795.7L1342.9,782.2L1337.1,782.2ZM1336.4,795.7L1342.2,795.7L1354.5,782.2L1348.7,782.2ZM1348.0,795.7L1353.8,795.7L1366.1,782.2L1360.3,782.2ZM1359.6,795.7L1365.4,795.7L1377.7,782.2L1371.9,782.2ZM1371.2,795.7L1377.0,795.7L1389.3,782.2L1383.5,782.2ZM1382.8,795.7L1388.6,795.7L1400.9,782.2L1395.1,782.2ZM1394.4,795.7L1400.2,795.7L1412.5,782.2L1406.7,782.2ZM1406.0,795.7L1411.8,795.7L1424.1,782.2L1418.3,782.2ZM1417.6,795.7L1423.4,795.7L1435.7,782.2L1429.9,782.2ZM1429.2,795.7L1435.0,795.7L1447.3,782.2L1441.5,782.2ZM1440.8,795.7L1446.6,795.7L1458.9,782.2L1453.1,782.2ZM1452.4,795.7L1458.2,795.7L1470.5,782.2L1464.7,782.2ZM1464.0,795.7L1469.8,795.7L1482.1,782.2L1476.3,782.2ZM1475.6,795.7L1481.4,795.7L1493.7,782.2L1487.9,782.2ZM1487.2,795.7L1493.0,795.7L1505.3,782.2L1499.5,782.2ZM1498.8,795.7L1504.6,795.7L1516.9,782.2L1511.1,782.2ZM1510.4,795.7L1516.2,795.7L1528.5,782.2L1522.7,782.2Z" fill="#d8d8d8"/><path d="M1643,782 H1678 L1695,793.5 H1646 Q1642,793.5 1642,790 Z" fill="#e6e6e6"/><path d="M1688,782 H1711 Q1714,782 1714,786 V790 Q1714,793.5 1710,793.5 H1705 Z" fill="#e6e6e6"/><text x="0" y="0" font-family="Liberation Sans" font-weight="bold" font-size="21" fill="#00ae42" transform="translate(1742,768.5) scale(1.45,1.05)">01</text><text x="0" y="0" font-family="Liberation Sans" font-size="28" fill="#cdcdcd" stroke="#cdcdcd" stroke-width="0.5" transform="translate(1075.5,417) rotate(90) scale(0.565,1.0)">bambu Lab</text><line x1="1373" y1="399.5" x2="1610" y2="399.5" stroke="#00c800" stroke-width="2.5"/><line x1="1669" y1="402" x2="1692" y2="566" stroke="#00b800" stroke-width="2.5"/><line x1="1130" y1="732.8" x2="1511" y2="732.8" stroke="#00c000" stroke-width="2"/><line x1="1130" y1="736.5" x2="1511" y2="736.5" stroke="#00c000" stroke-width="2"/><line x1="1130" y1="740.5" x2="1525" y2="740.5" stroke="#00c000" stroke-width="2"/><line x1="1101" y1="744.5" x2="1640" y2="744.5" stroke="#00c000" stroke-width="2"/><line x1="1129" y1="747" x2="1525" y2="747" stroke="#00c000" stroke-width="2"/><line x1="1049" y1="766" x2="1686" y2="764.5" stroke="#00c000" stroke-width="2"/><g fill="none" stroke="#00b000" stroke-width="1.1"><path d="M1098.5,689 L1117,689 L1118.5,671.5 L1132.5,671.5 L1130.5,689 L1145.5,689 L1139.5,739 L1091,740 Z"/><path d="M1093,703.5 L1148,703.5 L1146,715 L1092,715"/><path d="M1089,697 L1081.5,741 M1091,697 L1084,741 M1093,703 L1087,741"/></g><line x1="995" y1="780" x2="1075" y2="780" stroke="#c00000" stroke-width="3"/><path d="M1068,775 L1081,780 L1068,785 Z" fill="#c00000"/><line x1="995" y1="780" x2="1004" y2="732" stroke="#00b000" stroke-width="2.5"/><path d="M1000,734 L1005,724.5 L1007.5,735 Z" fill="#00b000"/><line x1="995" y1="780" x2="986.5" y2="718" stroke="#1a2f7a" stroke-width="2.5"/><path d="M983,722 L986,710 L991,721 Z" fill="#1a2f7a"/><defs>
<pattern id="tw" width="8" height="4.2" patternUnits="userSpaceOnUse"><rect width="8" height="4.2" fill="#8db68d"/><rect y="0" width="8" height="1" fill="#4fae4f"/><rect y="2.2" width="8" height="0.8" fill="#a7a7a7"/></pattern>
<pattern id="tt" width="8" height="5.5" patternUnits="userSpaceOnUse"><rect width="8" height="5.5" fill="#8fa978"/><rect y="0" width="8" height="1.2" fill="#c9884c"/><rect y="2.2" width="8" height="1" fill="#6f9a3a"/><rect y="3.8" width="8" height="0.9" fill="#a8a8a8"/></pattern>
<pattern id="hatch" width="5" height="5" patternUnits="userSpaceOnUse" patternTransform="rotate(-60)"><rect width="5" height="5" fill="#868686"/><rect width="2" height="5" fill="#22aa22"/></pattern>
</defs><polygon points="1094,395 1182.5,395 1187,478 1092,478" fill="url(#tw)"/><polygon points="1098.5,369 1185.7,369 1182,395 1094,395" fill="url(#tt)"/><polygon points="1098.5,369 1185.7,369 1182,395 1094,395" fill="none" stroke="#d81010" stroke-width="1.2"/><path d="M1096,382 H1184 M1095,389 H1183" stroke="#d81010" stroke-width="1"/><polygon points="1182.5,395 1185.7,369 1190,395 1195,478 1187,478" fill="url(#hatch)"/><polygon points="1189,444 1198,444 1195,478 1187,478" fill="url(#hatch)"/><path d="M1092,478 H1196" stroke="#00c000" stroke-width="1.5"/><defs><pattern id="spk" width="3" height="3" patternUnits="userSpaceOnUse"><rect width="3" height="3" fill="#d6d6d6"/><rect x="0" y="0" width="1" height="1" fill="#a8a8a8"/><rect x="1.5" y="1.5" width="1" height="1" fill="#f0f0f0"/></pattern></defs>
<g>
<path d="M1295.8,529.1 L1323,524.8 L1347.5,520.5 L1406.3,498.2 Q1440,501 1450.8,506.1 L1448.6,523.3 Q1443,533 1437.9,537.7 L1423.5,557.8 Q1410,568 1397.7,572.1 Q1380,577.5 1366.1,577.1 L1337.4,577.1 L1308.7,575 Q1300,570 1298.7,563.5 L1295.8,557.8 Z" fill="#bdbdbd"/>
<path d="M1297.2,529 L1325.2,524.8 L1325.2,555.6 L1298.7,557.8 Z" fill="url(#spk)"/>
<path d="M1406.3,498.2 Q1440,501 1450.8,506.1 L1448.6,523.3 Q1443,533 1437.9,537.7 L1423.5,557.8 L1403.5,556.5 L1406,510 Z" fill="#c9c9c9"/>
<path d="M1406.3,498.2 Q1440,501 1450.8,506.1 L1447,510 Q1430,504 1406.5,503 Z" fill="#e4e4e4"/>
<path d="M1352.5,556 L1403.5,556.5 L1423.5,557.8 Q1410,568 1397.7,572.1 Q1380,577.5 1366.1,577.1 L1337.4,577.1 L1308.7,575 Q1300,570 1298.7,563.5 L1295.8,557.8 Z" fill="#c6c6c6"/>
<path d="M1325.2,524.5 L1352.5,523.5 L1352.5,555.6 L1325.2,555.6 Z" fill="#10b810"/>
<path d="M1350.3,496 L1407,498.2 L1403.5,556.3 L1350.3,557.8 Z" fill="#bfbfbf"/>
<path d="M1364,523 Q1366,512 1377,511 Q1387,512 1389,523 L1387.5,552 L1364,556 Z" fill="#d2d2d2"/>
<path d="M1366,521 Q1369,514 1377,513 Q1384,514 1386,521 L1382,519 L1370,524 Z" fill="#8f8f8f"/>
<path d="M1362,557 L1361.5,518 Q1362,505.5 1376.2,505 Q1391,505.5 1392.5,518 L1390.5,549.5" fill="none" stroke="#10c010" stroke-width="3"/>
<path d="M1347.5,471.7 L1351,470.2 L1351,459.5 L1357.5,457.3 L1368.3,458 L1369,468.8 L1407,465.2 L1407.7,497.5 L1347.5,496 Z" fill="#d30000"/>
<path d="M1351,459.5 L1357.5,457.3 L1368.3,458 L1369,480.3 L1357.5,486.7 L1351,483.1 Z" fill="#a30000"/>
<path d="M1351.5,458.5 V438 Q1351.5,434 1357,434 Q1362.8,434 1362.8,438 V458 Z" fill="#cfcfcf"/>
<ellipse cx="1357.1" cy="436.5" rx="5.5" ry="3" fill="#ececec"/>
<ellipse cx="1437.9" cy="530" rx="3.6" ry="5.2" fill="none" stroke="#10b810" stroke-width="2.2" transform="rotate(25 1437.9 530)"/>
<ellipse cx="1433.5" cy="512" rx="2.6" ry="3.8" fill="#10b810"/>
<path d="M1298.5,540 L1307,548" stroke="#10b810" stroke-width="2"/>
</g></svg>
<div style="position:absolute;left:1608px;top:102px;width:496px;height:436px;background:rgba(37,37,37,0.6);"></div>
<div style="position:absolute;left:1608px;top:102px;width:496px;height:38px;background:rgba(0,0,0,0.3);"></div>
<div style="position:absolute;left:1608px;top:102px;width:496px;height:1px;background:#6a6a78;"></div>
<svg style="position:absolute;left:1621px;top:113px;" width="22" height="16" viewBox="0 0 22 16"><polyline points="2,8 10,2 18,8" fill="none" stroke="#fff" stroke-width="1.8"/><polyline points="2,14 10,8 18,14" fill="none" stroke="#fff" stroke-width="1.8"/></svg>
<div class="t" style="left:1656.30px;top:112.92px;font-size:18.4px;line-height:18.4px;color:#ffffff;font-weight:bold;">Color scheme</div>
<div style="position:absolute;left:1790px;top:108px;width:301px;height:26px;background:#3a3b3c;border-radius:3px;"></div>
<svg style="position:absolute;left:1796px;top:116px;" width="17" height="9" viewBox="0 0 17 9"><polyline points="1,1.5 8,7 15,1.5" fill="none" stroke="#f0f0f0" stroke-width="1.5"/></svg>
<div class="t" style="left:1820.30px;top:112.08px;font-size:19.4px;line-height:19.4px;color:#ffffff;">Filament</div>
<div class="t" style="left:1619.30px;top:144.36px;font-size:19.3px;line-height:19.3px;color:#ffffff;font-weight:bold;">Color print</div>
<div class="t" style="left:1756.80px;top:144.79px;font-size:18.8px;line-height:18.8px;color:#ffffff;font-weight:bold;">Consumption</div>
<div class="t" style="left:1963.80px;top:144.79px;font-size:18.8px;line-height:18.8px;color:#ffffff;font-weight:bold;">Display</div>
<div style="position:absolute;left:1608px;top:167.5px;width:496px;height:1.5px;background:#b4b4b4;"></div>
<div style="position:absolute;left:1621px;top:175px;width:14px;height:14px;background:#00d000;"></div>
<div class="t" style="left:1642.30px;top:174.46px;font-size:19.3px;line-height:19.3px;color:#ffffff;letter-spacing:0.167px;">Filament 1</div>
<div class="t" style="left:1756.80px;top:174.46px;font-size:19.3px;line-height:19.3px;color:#ffffff;letter-spacing:0.08px;">3.68 m</div>
<div class="t" style="left:1824.30px;top:174.46px;font-size:19.3px;line-height:19.3px;color:#ffffff;letter-spacing:0.362px;">11.16g</div>
<div style="position:absolute;left:1965px;top:172px;width:22px;height:22px;background:#4b4e4f;"></div>
<svg style="position:absolute;left:1966px;top:174px;" width="20" height="18" viewBox="0 0 20 18"><polyline points="3,9.5 8,14 17.5,4" fill="none" stroke="#00b040" stroke-width="3"/></svg>
<div style="position:absolute;left:1621px;top:203px;width:14px;height:14px;background:#ffffff;"></div>
<div class="t" style="left:1642.30px;top:202.46px;font-size:19.3px;line-height:19.3px;color:#ffffff;letter-spacing:0.223px;">Filament 4</div>
<div class="t" style="left:1756.80px;top:202.46px;font-size:19.3px;line-height:19.3px;color:#ffffff;letter-spacing:0.08px;">4.69 m</div>
<div class="t" style="left:1824.30px;top:202.46px;font-size:19.3px;line-height:19.3px;color:#ffffff;letter-spacing:0.075px;">14.21g</div>
<div style="position:absolute;left:1965px;top:200px;width:22px;height:22px;background:#4b4e4f;"></div>
<svg style="position:absolute;left:1966px;top:202px;" width="20" height="18" viewBox="0 0 20 18"><polyline points="3,9.5 8,14 17.5,4" fill="none" stroke="#00b040" stroke-width="3"/></svg>
<div style="position:absolute;left:1621px;top:231px;width:14px;height:14px;background:#f00000;"></div>
<div class="t" style="left:1642.30px;top:230.46px;font-size:19.3px;line-height:19.3px;color:#ffffff;letter-spacing:0.223px;">Filament 5</div>
<div class="t" style="left:1756.80px;top:230.46px;font-size:19.3px;line-height:19.3px;color:#ffffff;letter-spacing:0.08px;">0.30 m</div>
<div class="t" style="left:1824.30px;top:230.46px;font-size:19.3px;line-height:19.3px;color:#ffffff;letter-spacing:0.152px;">0.92g</div>
<div style="position:absolute;left:1965px;top:228px;width:22px;height:22px;background:#4b4e4f;"></div>
<svg style="position:absolute;left:1966px;top:230px;" width="20" height="18" viewBox="0 0 20 18"><polyline points="3,9.5 8,14 17.5,4" fill="none" stroke="#00b040" stroke-width="3"/></svg>
<div style="position:absolute;left:1621px;top:259px;width:14px;height:14px;background:#2f6fc0;"></div>
<div class="t" style="left:1642.30px;top:258.46px;font-size:19.3px;line-height:19.3px;color:#ffffff;letter-spacing:0.199px;">Travel</div>
<div style="position:absolute;left:1965px;top:256px;width:22px;height:22px;background:#4b4e4f;"></div>
<div style="position:absolute;left:1621px;top:287px;width:14px;height:14px;background:#e4e4e4;"></div>
<div class="t" style="left:1642.30px;top:286.46px;font-size:19.3px;line-height:19.3px;color:#ffffff;letter-spacing:-0.566px;">Seams</div>
<div style="position:absolute;left:1965px;top:284px;width:22px;height:22px;background:#4b4e4f;"></div>
<div class="t" style="left:1619.30px;top:314.08px;font-size:19.4px;line-height:19.4px;color:#ffffff;letter-spacing:0.162px;">Flushed filament:</div>
<div class="t" style="left:1822.80px;top:314.16px;font-size:19.3px;line-height:19.3px;color:#ffffff;letter-spacing:0.112px;">26.60 m</div>
<div class="t" style="left:1910.80px;top:314.16px;font-size:19.3px;line-height:19.3px;color:#ffffff;letter-spacing:0.186px;">80.61 g</div>
<div class="t" style="left:1619.30px;top:340.08px;font-size:19.4px;line-height:19.4px;color:#ffffff;letter-spacing:0.098px;">Filament change times:</div>
<div class="t" style="left:1833.80px;top:340.16px;font-size:19.3px;line-height:19.3px;color:#ffffff;letter-spacing:0.251px;">183</div>
<div class="t" style="left:1619.30px;top:375.99px;font-size:19.5px;line-height:19.5px;color:#ffffff;font-weight:bold;">Total estimation</div>
<div style="position:absolute;left:1608px;top:400px;width:496px;height:1.5px;background:#b4b4b4;"></div>
<div class="t" style="left:1619.30px;top:405.99px;font-size:19.5px;line-height:19.5px;color:#ffffff;letter-spacing:0.064px;">Filament:</div>
<div class="t" style="left:1798.30px;top:406.16px;font-size:19.3px;line-height:19.3px;color:#ffffff;letter-spacing:0.112px;">35.28 m</div>
<div class="t" style="left:1619.30px;top:431.99px;font-size:19.5px;line-height:19.5px;color:#ffffff;letter-spacing:-0.153px;">Cost:</div>
<div class="t" style="left:1798.30px;top:432.16px;font-size:19.3px;line-height:19.3px;color:#ffffff;letter-spacing:-0.053px;">2.67</div>
<div class="t" style="left:1619.30px;top:457.99px;font-size:19.5px;line-height:19.5px;color:#ffffff;letter-spacing:0.063px;">Prepare time:</div>
<div class="t" style="left:1798.30px;top:458.16px;font-size:19.3px;line-height:19.3px;color:#ffffff;letter-spacing:0.991px;">7m</div>
<div class="t" style="left:1619.30px;top:483.99px;font-size:19.5px;line-height:19.5px;color:#ffffff;letter-spacing:0.408px;">Model printing time:</div>
<div class="t" style="left:1798.30px;top:484.16px;font-size:19.3px;line-height:19.3px;color:#ffffff;letter-spacing:0.448px;">5h15m</div>
<div class="t" style="left:1619.30px;top:509.99px;font-size:19.5px;line-height:19.5px;color:#ffffff;letter-spacing:0.539px;">Total:</div>
<div class="t" style="left:1798.30px;top:510.16px;font-size:19.3px;line-height:19.3px;color:#ffffff;letter-spacing:0.448px;">5h22m</div>
<div class="t" style="left:1886.80px;top:406.33px;font-size:19.1px;line-height:19.1px;color:#ffffff;letter-spacing:0.237px;">106.91 g</div>
<div style="position:absolute;left:2177px;top:214px;width:8px;height:862px;background:#00ae42;box-shadow:0 0 0 1px #fff;"></div>
<div style="position:absolute;left:2168.5px;top:201.5px;width:25px;height:25px;background:#00ae42;border:1.5px solid #fff;border-radius:50%;box-sizing:content-box;left:2167px;top:200px;"></div>
<div style="position:absolute;left:2174px;top:212.5px;width:16px;height:2px;background:#fff;"></div>
<div style="position:absolute;left:2181px;top:205.5px;width:2px;height:16px;background:#fff;"></div>
<div style="position:absolute;left:2167.5px;top:1063px;width:24px;height:24px;background:#00ae42;border:1.5px solid #fff;border-radius:50%;"></div>
<svg style="position:absolute;left:2099px;top:165px;" width="76" height="52" viewBox="0 0 76 52"><path d="M2,0 H57 Q59,0 59,2 V44 L70,49 L59,49 H2 Q0,49 0,47 V2 Q0,0 2,0 Z" fill="#fff"/></svg>
<div class="t" style="left:2113.30px;top:168.82px;font-size:20.3px;line-height:20.3px;color:#00ae42;letter-spacing:-0.483px;">240</div>
<div class="t" style="left:2103.30px;top:191.42px;font-size:20.3px;line-height:20.3px;color:#00ae42;letter-spacing:-0.699px;">48.00</div>
<svg style="position:absolute;left:2105px;top:1070px;" width="70" height="57" viewBox="0 0 70 57"><path d="M2,7 H51 L64,0 L53,9 V54 Q53,56 51,56 H2 Q0,56 0,54 V9 Q0,7 2,7 Z" fill="#fff"/></svg>
<div class="t" style="left:2129.80px;top:1079.52px;font-size:20.3px;line-height:20.3px;color:#00ae42;">1</div>
<div class="t" style="left:2114.30px;top:1102.12px;font-size:20.3px;line-height:20.3px;color:#00ae42;letter-spacing:-0.802px;">0.20</div>
<svg style="position:absolute;left:2171px;top:1135px;" width="22" height="21" viewBox="0 0 22 21"><path d="M10.5,1 L20.5,6.5 L10.5,12 L0.5,6.5 Z" fill="#00ae42" stroke="#fff" stroke-width="0.8"/><path d="M2,9.5 L10.5,14.2 L19,9.5 L20.5,10.7 L10.5,16.2 L0.5,10.7 Z" fill="#00ae42"/><path d="M2,13.5 L10.5,18.2 L19,13.5 L20.5,14.7 L10.5,20.2 L0.5,14.7 Z" fill="#00ae42"/></svg>
<div style="position:absolute;left:963.5px;top:1137px;width:838px;height:8px;background:#00ae42;border-radius:2.5px;box-shadow:0 0 0 1.6px #fff;"></div>
<div style="position:absolute;left:1788.5px;top:1128.5px;width:25px;height:25px;background:#00ae42;border:1.5px solid #fff;border-radius:50%;left:1787.5px;top:1127.5px;"></div>
<svg style="position:absolute;left:1816px;top:1128px;" width="50" height="26" viewBox="0 0 50 26"><path d="M9,0 H48 Q50,0 50,2 V24 Q50,26 48,26 H9 Q7,26 7,24 V16 L2,13 L7,10 V2 Q7,0 9,0 Z" fill="#fff"/></svg>
<div class="t" style="left:1827.30px;top:1131.32px;font-size:20.3px;line-height:20.3px;color:#00ae42;letter-spacing:-0.583px;">158</div>
<div style="position:absolute;left:1542px;top:1031px;width:562px;height:66px;background:#fff;border:1px solid #f7b07c;border-radius:4px;box-sizing:border-box;"></div>
<div style="position:absolute;left:1542px;top:1031px;width:10px;height:66px;background:#f8ac6e;border-radius:4px 0 0 4px;"></div>
<div class="t" style="left:1562.80px;top:1044.37px;font-size:20px;line-height:20px;color:#333333;letter-spacing:0.217px;">Warning:</div>
<div class="t" style="left:1562.80px;top:1066.94px;font-size:19.8px;line-height:19.8px;color:#333333;letter-spacing:-0.046px;">It seems object 3DBenchy.stl has completely flo..</div>
<div class="t" style="left:1994.30px;top:1067.02px;font-size:19.7px;line-height:19.7px;color:#00ae42;letter-spacing:0.507px;text-decoration:underline;text-underline-offset:3px;">More</div>
<div style="position:absolute;left:2053px;top:1044px;width:39px;height:39px;background:#ececec;border-radius:50%;"></div>
<svg style="position:absolute;left:2060px;top:1052px;" width="24" height="24" viewBox="0 0 24 24"><line x1="1.5" y1="1.5" x2="22.5" y2="22.5" stroke="#9a9a9a" stroke-width="2"/><line x1="22.5" y1="1.5" x2="1.5" y2="22.5" stroke="#9a9a9a" stroke-width="2"/></svg>
</body></html>
